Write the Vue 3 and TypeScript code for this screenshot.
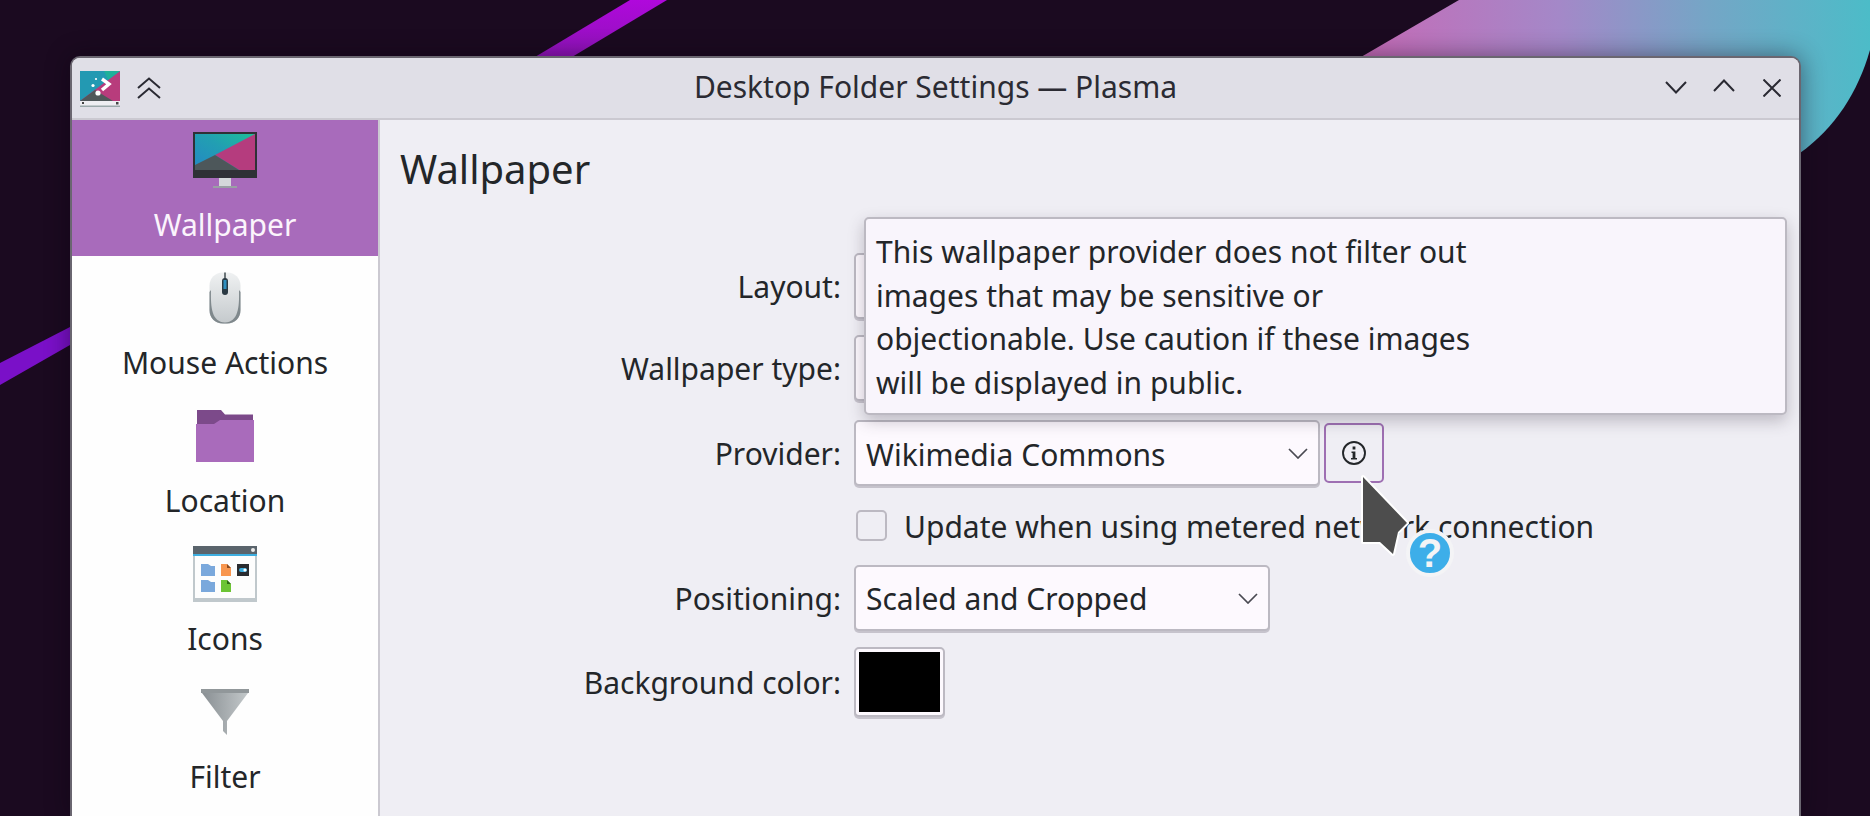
<script setup lang="ts">
const nav = [
  { label: 'Wallpaper', icon: 'monitor', active: true },
  { label: 'Mouse Actions', icon: 'mouse', active: false },
  { label: 'Location', icon: 'folder', active: false },
  { label: 'Icons', icon: 'icons', active: false },
  { label: 'Filter', icon: 'filter', active: false },
]
</script>

<template>
  <div class="desktop">
    <svg class="wall" width="1870" height="816" viewBox="0 0 1870 816">
      <defs>
        <linearGradient id="blob" x1="1370" y1="40" x2="1870" y2="20" gradientUnits="userSpaceOnUse">
          <stop offset="0" stop-color="#c46cb8" />
          <stop offset="0.38" stop-color="#a488c8" />
          <stop offset="0.68" stop-color="#74a6c6" />
          <stop offset="1" stop-color="#4cbcc8" />
        </linearGradient>
        <linearGradient id="scr" x1="0" y1="1" x2="1" y2="0">
          <stop offset="0" stop-color="#2488c4" />
          <stop offset="0.55" stop-color="#229fb2" />
          <stop offset="1" stop-color="#1cbf98" />
        </linearGradient>
        <linearGradient id="stripe" x1="0" y1="0" x2="0" y2="1">
          <stop offset="0" stop-color="#b008dc" />
          <stop offset="1" stop-color="#8e14b8" />
        </linearGradient>
      </defs>
      <polygon points="630,0 667,0 572,57 535,57" fill="url(#stripe)" />
      <polygon points="0,363 70,327 70,345 0,385" fill="#7a10c8" />
      <path d="M1459,0 L1870,0 L1870,50 C1858,92 1835,128 1800,153 L1340,90 L1361,57 Z" fill="url(#blob)" />
    </svg>

    <section class="window">
      <header class="titlebar">
        <svg class="app-icon" width="40" height="36" viewBox="0 0 40 36">
          <rect x="0" y="0" width="40" height="30" fill="#2399b2" />
          <polygon points="0,30 40,0 40,30" fill="#b83c7c" />
          <polygon points="0,30 15,19 33,30" fill="#50585a" />
          <polygon points="24,0 40,0 28,9" fill="#1fb09a" />
          <path d="M22,8 L29,13 L22,19" fill="none" stroke="#fff" stroke-width="3.4" />
          <circle cx="18" cy="22" r="2.6" fill="#fff" />
          <circle cx="13" cy="14.5" r="1.6" fill="#fff" />
          <circle cx="16" cy="8" r="1.1" fill="#fff" />
          <rect x="0" y="30" width="40" height="5" fill="#eeeef2" />
          <rect x="0" y="34.5" width="40" height="1.5" fill="#9aa8aa" />
          <rect x="36" y="31" width="2.5" height="2.5" fill="#444" />
          <rect x="2" y="31" width="2" height="2" fill="#444" />
        </svg>
        <svg class="shade" width="24" height="22" viewBox="0 0 24 22" fill="none" stroke="#2a2a33" stroke-width="2">
          <path d="M1,11 L12,1.5 L23,11" />
          <path d="M1,21 L12,11.5 L23,21" />
        </svg>
        <div class="title">Desktop Folder Settings — Plasma</div>
        <div class="controls">
          <svg class="ctl-down" width="22" height="13" viewBox="0 0 22 13" fill="none" stroke="#2a2a33" stroke-width="2"><path d="M1,1 L11,11.5 L21,1" /></svg>
          <svg class="ctl-up" width="22" height="13" viewBox="0 0 22 13" fill="none" stroke="#2a2a33" stroke-width="2"><path d="M1,12 L11,1.5 L21,12" /></svg>
          <svg width="18" height="18" viewBox="0 0 18 18" fill="none" stroke="#2a2a33" stroke-width="2"><path d="M0.5,0.5 L17.5,17.5 M17.5,0.5 L0.5,17.5" /></svg>
        </div>
      </header>

      <div class="body">
        <nav class="sidebar">
          <div v-for="item in nav" :key="item.label" class="nav-item" :class="{ active: item.active }">
            <div class="nav-icon">
              <svg v-if="item.icon === 'monitor'" class="monitor" width="64" height="56" viewBox="0 0 64 56">
                <rect x="0" y="0" width="64" height="46" fill="#2f3136" />
                <rect x="2" y="2" width="60" height="36" fill="url(#scr)" />
                <polygon points="62,2 62,38 46,38 22,23" fill="#b53c7e" />
                <polygon points="2,33 22,23 46,38 2,38" fill="#4d575a" />
                <rect x="26" y="46" width="12" height="8" fill="#d4d8da" />
                <rect x="20" y="54" width="24" height="2" fill="#9aa0a4" />
              </svg>
              <svg v-else-if="item.icon === 'mouse'" width="32" height="52" viewBox="0 0 32 52">
                <defs>
                  <linearGradient id="mg" x1="0" y1="0" x2="0" y2="1">
                    <stop offset="0" stop-color="#eff1f2" />
                    <stop offset="1" stop-color="#c4c9cc" />
                  </linearGradient>
                </defs>
                <rect x="0.5" y="0.5" width="31" height="51" rx="13" fill="url(#mg)" />
                <path d="M0.5,20 L0.5,38 C0.5,46 6,51.5 14,51.5 L18,51.5 C26,51.5 31.5,46 31.5,38 L31.5,20 L30,18 C30.5,36 29,50 16,50.5 C3,50 1.5,36 2,18 Z" fill="#7f888c" />
                <rect x="15" y="0.5" width="2" height="7" fill="#6b7478" />
                <rect x="13" y="6" width="6" height="17" rx="3" fill="#2b3a44" />
                <rect x="14.5" y="8" width="3" height="9" fill="#2f8fc0" />
              </svg>
              <svg v-else-if="item.icon === 'folder'" width="58" height="52" viewBox="0 0 58 52">
                <path d="M1,0 H25 L29,4.5 H57 V16 H1 Z" fill="#7c4a8a" />
                <path d="M0,14 H18 L24,10 H58 V52 H0 Z" fill="#a96bbb" />
              </svg>
              <svg v-else-if="item.icon === 'icons'" width="64" height="56" viewBox="0 0 64 56">
                <rect x="0" y="0" width="64" height="56" fill="#c0c8cc" />
                <rect x="2" y="10" width="60" height="42" fill="#fdfdfd" />
                <rect x="0" y="0" width="64" height="8" fill="#5a646c" />
                <rect x="0" y="8" width="64" height="2" fill="#3daee0" />
                <circle cx="60" cy="4" r="2" fill="#ececec" />
                <path d="M8,18 H15 L18,20 H22 V30 H8 Z" fill="#7aa8dc" />
                <path d="M8,34 H15 L18,36 H22 V46 H8 Z" fill="#7aa8dc" />
                <path d="M28,18 H34 L38,22 V30 H28 Z" fill="#f8964f" />
                <path d="M34,18 L38,22 H34 Z" fill="#8a4a20" />
                <path d="M28,34 H34 L38,38 V46 H28 Z" fill="#6cc434" />
                <path d="M34,34 L38,38 H34 Z" fill="#2d6a14" />
                <rect x="44" y="18" width="12" height="12" fill="#2a2c30" />
                <rect x="46" y="22" width="8" height="4" rx="2" fill="#3daee0" />
                <circle cx="52" cy="24" r="1.6" fill="#fff" />
              </svg>
              <svg v-else width="48" height="46" viewBox="0 0 48 46">
                <defs>
                  <linearGradient id="fg" x1="0" y1="0" x2="1" y2="0">
                    <stop offset="0" stop-color="#888e92" />
                    <stop offset="1" stop-color="#c4c9cb" />
                  </linearGradient>
                </defs>
                <polygon points="0,0 48,0 48,2 47,4 26,32 26,46 22,42 22,32 1,4 0,2" fill="url(#fg)" />
                <rect x="0" y="0" width="48" height="4" fill="#91979a" />
              </svg>
            </div>
            <div class="nav-label">{{ item.label }}</div>
          </div>
        </nav>

        <main class="content">
          <h1 class="heading">Wallpaper</h1>
          <div class="form">
            <label class="lbl">Layout:</label>
            <div class="combo layout-combo"></div>

            <label class="lbl">Wallpaper type:</label>
            <div class="combo type-combo"></div>

            <label class="lbl provider-row">Provider:</label>
            <div class="field-row provider-row">
              <div class="combo provider-combo">
                <span class="raised">Wikimedia Commons</span>
                <svg class="chev" width="20" height="11" viewBox="0 0 20 11" fill="none" stroke="#4a4a52" stroke-width="1.7"><path d="M1,1 L10,10 L19,1" /></svg>
              </div>
              <button class="info-btn">
                <svg width="26" height="26" viewBox="0 0 26 26">
                  <circle cx="13" cy="13" r="11" fill="none" stroke="#232629" stroke-width="1.9" />
                  <rect x="11.6" y="6.5" width="2.8" height="3" fill="#232629" />
                  <path d="M10.5,11.5 H14.4 V18 H16 V19.6 H10 V18 H11.6 V13 H10.5 Z" fill="#232629" />
                </svg>
              </button>
            </div>

            <span></span>
            <div class="check-row">
              <span class="check"></span>
              <span class="raised">Update when using metered network connection</span>
            </div>

            <label class="lbl">Positioning:</label>
            <div class="combo pos-combo">
              <span>Scaled and Cropped</span>
              <svg class="chev" width="20" height="11" viewBox="0 0 20 11" fill="none" stroke="#4a4a52" stroke-width="1.7"><path d="M1,1 L10,10 L19,1" /></svg>
            </div>

            <label class="lbl">Background color:</label>
            <div class="swatch"><span></span></div>
          </div>

          <div class="tooltip">This wallpaper provider does not filter out<br />images that may be sensitive or<br />objectionable. Use caution if these images<br />will be displayed in public.</div>
        </main>
      </div>

      <svg class="cursor" width="96" height="106" viewBox="0 0 96 106">
        <path d="M3,3 L3,68 L20,68 L33,80 L38,58 L47,49 Z" fill="#4d4d4d" stroke="#fff" stroke-width="4" stroke-linejoin="round" paint-order="stroke" />
        <circle cx="70" cy="79" r="22" fill="#3daee9" stroke="#f4f4f6" stroke-width="4" />
        <text x="70" y="93" class="q">?</text>
      </svg>
    </section>
  </div>
</template>

<style>
html, body { margin: 0; background: #1b0a20; overflow: hidden; }
</style>

<style scoped>
.desktop {
  position: relative;
  width: 1870px;
  height: 816px;
  background: #1b0a20;
  overflow: hidden;
  font-family: "Noto Sans", sans-serif;
  color: #232629;
  font-size: 30px;
}
.wall { position: absolute; inset: 0; }
.window {
  position: absolute;
  left: 70px;
  top: 56px;
  width: 1731px;
  height: 760px;
  display: flex;
  flex-direction: column;
  box-sizing: border-box;
  border: 2px solid #6a6670;
  border-bottom: 0;
  border-radius: 10px 10px 0 0;
  background: #efeef4;
  box-shadow: 0 0 24px rgba(10, 5, 15, 0.45);
}
.titlebar {
  height: 60px;
  flex: none;
  display: flex;
  align-items: center;
  background: #e0dfe7;
  border-bottom: 2px solid #cbc9d1;
  border-radius: 8px 8px 0 0;
  padding: 0 18px 0 8px;
  position: relative;
}
.app-icon { margin-top: 2px; }
.shade { margin-left: 17px; margin-top: -1px; }
.title {
  position: absolute;
  left: 0;
  right: 0;
  top: 7px;
  text-align: center;
  line-height: 44px;
  color: #2b2b33;
}
.controls {
  margin-left: auto;
  display: flex;
  align-items: center;
  gap: 26px;
  margin-top: -1px;
}
.ctl-up { margin-top: -4px; margin-right: 2px; }
.body { flex: 1; display: flex; min-height: 0; }
.sidebar {
  width: 306px;
  flex: none;
  background: #fefefe;
  border-right: 2px solid #cbc9d1;
  overflow: hidden;
}
.nav-item {
  height: 138px;
  display: flex;
  flex-direction: column;
  align-items: center;
  text-align: center;
}
.nav-item.active { background: #a86bbb; color: #fbf4fc; height: 136px; }
.nav-icon {
  height: 78px;
  display: flex;
  align-items: center;
  justify-content: center;
  padding-top: 6px;
  box-sizing: border-box;
}
.monitor { margin-top: -4px; }
.nav-label { line-height: 38px; margin-top: 10px; }
.active .nav-label { margin-top: 8px; }
.content { flex: 1; position: relative; padding: 0 20px; }
.heading {
  margin: 22px 0 0;
  font-size: 40px;
  font-weight: 400;
  line-height: 54px;
}
.form {
  display: grid;
  grid-template-columns: 441px 1fr;
  column-gap: 13px;
  row-gap: 16px;
  align-items: center;
  margin-top: 57px;
}
.lbl { text-align: right; line-height: 38px; padding-top: 2px; }
.provider-row { margin-top: 3px; }
.raised { padding-top: 2px; }
.combo {
  height: 66px;
  box-sizing: border-box;
  background: #fdf9fe;
  border: 2px solid #bcb9c2;
  border-radius: 5px;
  box-shadow: 0 2px 0 #c6c3cc;
  display: flex;
  align-items: center;
  justify-content: space-between;
  padding: 0 10px;
}
.layout-combo, .type-combo { width: 300px; }
.field-row { display: flex; align-items: center; gap: 4px; }
.provider-combo { width: 466px; }
.pos-combo { width: 416px; }
.info-btn {
  width: 60px;
  height: 60px;
  box-sizing: border-box;
  background: transparent;
  border: 2px solid #9e6fb2;
  border-radius: 5px;
  padding: 0;
  display: flex;
  align-items: center;
  justify-content: center;
}
.check-row { display: flex; align-items: center; gap: 17px; height: 47px; padding-left: 2px; }
.check {
  width: 31px;
  height: 31px;
  box-sizing: border-box;
  border: 2px solid #bcb9c2;
  border-radius: 5px;
}
.swatch {
  width: 91px;
  height: 70px;
  box-sizing: border-box;
  background: #fdf9fe;
  border: 2px solid #bcb9c2;
  border-radius: 5px;
  box-shadow: 0 2px 0 #c6c3cc;
  padding: 3px;
  display: flex;
}
.swatch span { flex: 1; background: #000; }
.tooltip {
  position: absolute;
  left: 484px;
  top: 97px;
  width: 923px;
  height: 198px;
  box-sizing: border-box;
  background: #f9f5fc;
  border: 2px solid #bcb9c2;
  border-radius: 5px;
  box-shadow: 0 6px 16px rgba(60, 50, 70, 0.28);
  padding: 11px 10px 0;
  line-height: 43.7px;
}
.cursor {
  position: absolute;
  left: 1288px;
  top: 416px;
}
.q {
  font-family: "Liberation Sans", sans-serif;
  font-weight: 700;
  font-size: 40px;
  fill: #f4f4f6;
  text-anchor: middle;
}
</style>
